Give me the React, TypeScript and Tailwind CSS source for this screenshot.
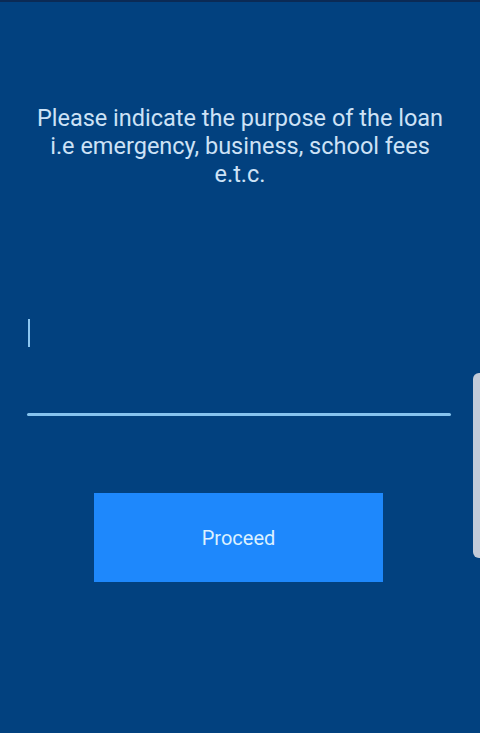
import React from 'react';

export default function App() {
  return (
    <div
      className="relative w-[480px] h-[733px] overflow-hidden bg-[#02417f] border-t-2 border-[#0b2a55]"
      style={{ fontFamily: 'Roboto, "Noto Sans", sans-serif' }}
    >
      <div className="flex flex-col items-center pt-[102px]">
        <p className="w-[460px] text-center text-[23.5px] leading-[28px] text-[#cde2f6]">
          Please indicate the purpose of the loan
          <br />
          i.e emergency, business, school fees
          <br />
          e.t.c.
        </p>
      </div>

      <div className="mt-[131px] mx-[27px] w-[424px]">
        <div className="h-[28px] flex items-center">
          <div className="w-[2px] h-[28px] bg-[#8dc6ef] ml-[1px]" />
        </div>
        <div className="mt-[66px] h-[3px] bg-[#86c3ee] rounded-full" />
      </div>

      <div className="flex pl-[94px] mt-[77px]">
        <button className="w-[289px] h-[89px] bg-[#1e88fc] text-[#dcf1ff] text-[20px]">
          Proceed
        </button>
      </div>

      <div className="absolute right-0 top-[371px] w-[7px] h-[185px] rounded-l-[6px] bg-[#c3cbd9]" />
    </div>
  );
}
